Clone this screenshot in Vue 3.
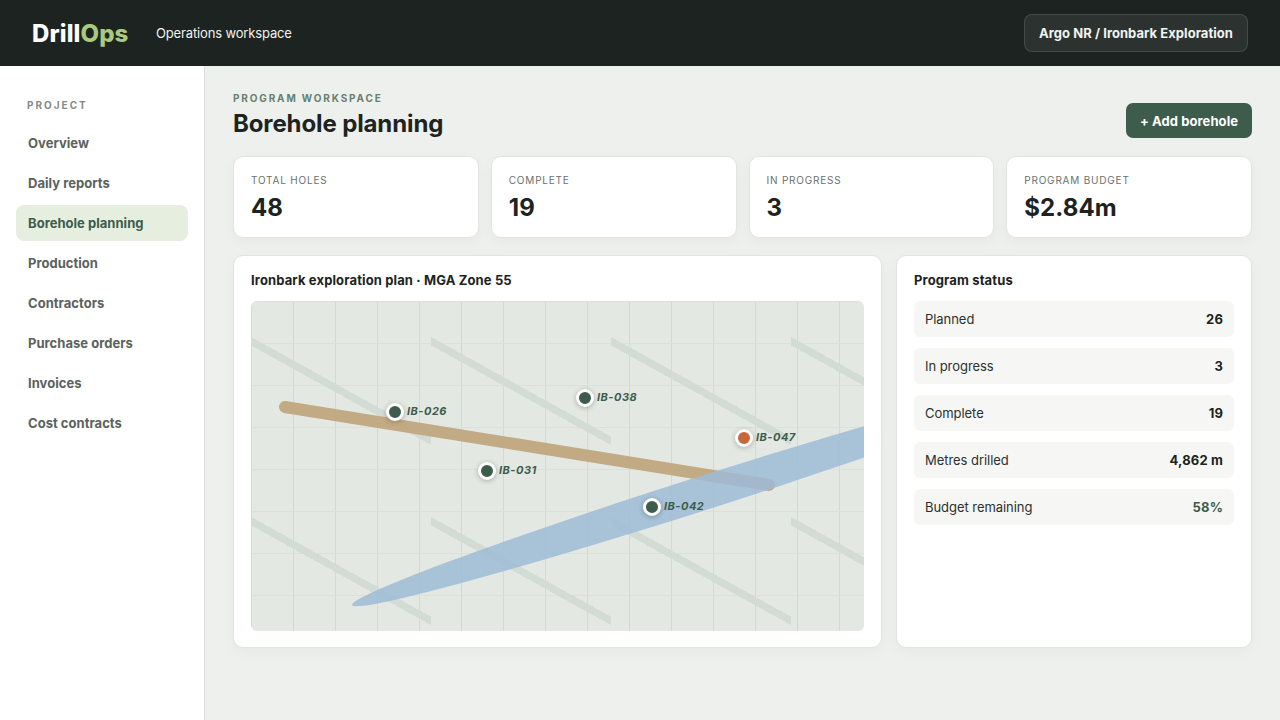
<script setup>
const nav = ['Overview', 'Daily reports', 'Borehole planning', 'Production', 'Contractors', 'Purchase orders', 'Invoices', 'Cost contracts']
const stats = [
  { label: 'TOTAL HOLES', value: '48' },
  { label: 'COMPLETE', value: '19' },
  { label: 'IN PROGRESS', value: '3' },
  { label: 'PROGRAM BUDGET', value: '$2.84m' },
]
const status = [
  { label: 'Planned', value: '26' },
  { label: 'In progress', value: '3' },
  { label: 'Complete', value: '19' },
  { label: 'Metres drilled', value: '4,862 m' },
  { label: 'Budget remaining', value: '58%', good: true },
]
const pins = [
  { id: 'IB-026', x: 144, y: 111 },
  { id: 'IB-038', x: 334, y: 97 },
  { id: 'IB-031', x: 236, y: 170 },
  { id: 'IB-042', x: 401, y: 206 },
  { id: 'IB-047', x: 493, y: 137, alert: true },
]
</script>

<template>
  <div class="app">
    <header class="topbar">
      <div class="logo">Drill<span>Ops</span></div>
      <div class="tagline">Operations workspace</div>
      <div class="chip">Argo NR / Ironbark Exploration</div>
    </header>
    <div class="body">
      <aside class="sidebar">
        <div class="side-title">PROJECT</div>
        <nav class="nav">
          <a v-for="n in nav" :key="n" class="nav-item" :class="{ active: n === 'Borehole planning' }">{{ n }}</a>
        </nav>
      </aside>
      <main class="main">
        <div class="head">
          <div>
            <div class="eyebrow">PROGRAM WORKSPACE</div>
            <h1>Borehole planning</h1>
          </div>
          <button class="add">+ Add borehole</button>
        </div>
        <section class="stats">
          <div v-for="s in stats" :key="s.label" class="card stat">
            <div class="stat-label">{{ s.label }}</div>
            <div class="stat-value">{{ s.value }}</div>
          </div>
        </section>
        <section class="lower">
          <div class="card panel">
            <h2>Ironbark exploration plan · MGA Zone 55</h2>
            <div class="map">
              <svg class="overlay" width="613" height="330" viewBox="0 0 613 330">
                <line x1="34" y1="106" x2="518" y2="184" stroke="#c2aa84" stroke-width="12" stroke-linecap="round" />
                <ellipse cx="446" cy="194" rx="362" ry="17" transform="rotate(-17.7 446 194)" fill="#9dbbd6" fill-opacity="0.85" />
              </svg>
              <div
                v-for="p in pins"
                :key="p.id"
                class="pin"
                :style="{ left: p.x + 'px', top: p.y + 'px' }"
              >
                <span class="dot" :class="{ alert: p.alert }"></span>
                <span class="pin-label">{{ p.id }}</span>
              </div>
            </div>
          </div>
          <div class="card panel">
            <h2>Program status</h2>
            <div class="rows">
              <div v-for="r in status" :key="r.label" class="row">
                <span>{{ r.label }}</span>
                <strong :class="{ good: r.good }">{{ r.value }}</strong>
              </div>
            </div>
          </div>
        </section>
      </main>
    </div>
  </div>
</template>

<style>
html, body { margin: 0; }
</style>

<style scoped>
.app {
  width: 1280px;
  height: 720px;
  display: flex;
  flex-direction: column;
  overflow: hidden;
  font-family: Inter, "Liberation Sans", sans-serif;
  color: #1c2321;
  background: #eef0ed;
}
.topbar {
  height: 66px;
  flex: none;
  box-sizing: border-box;
  background: #1c2321;
  display: flex;
  align-items: center;
  padding: 0 32px;
}
.logo {
  font-size: 24px;
  font-weight: 800;
  letter-spacing: 0.12px;
  color: #fff;
  width: 124px;
}
.logo span { color: #a9c97f; }
.tagline { font-size: 13px; letter-spacing: -0.15px; color: #f1f3ef; }
.chip {
  margin-left: auto;
  box-sizing: border-box;
  height: 38px;
  display: flex;
  align-items: center;
  padding: 0 14px;
  font-size: 13px;
  font-weight: 650;
  letter-spacing: 0.05px;
  color: #f2f4f0;
  background: rgba(255, 255, 255, 0.07);
  border: 1px solid rgba(255, 255, 255, 0.12);
  border-radius: 8px;
}
.body { flex: 1; display: flex; min-height: 0; }
.sidebar {
  width: 205px;
  flex: none;
  box-sizing: border-box;
  background: #fff;
  border-right: 1px solid #dcdfdb;
  padding: 33px 16px 0;
}
.side-title {
  font-size: 10px;
  font-weight: 650;
  letter-spacing: 2px;
  line-height: 12px;
  color: #858b87;
  padding-left: 11px;
  margin-bottom: 14px;
}
.nav { display: flex; flex-direction: column; gap: 4px; }
.nav-item {
  height: 36px;
  display: flex;
  align-items: center;
  padding: 0 12px;
  border-radius: 8px;
  font-size: 13px;
  font-weight: 650;
  letter-spacing: 0.03px;
  color: #5b625e;
}
.nav-item.active { background: #e6eee0; color: #3d5c4b; }
.main { flex: 1; min-width: 0; box-sizing: border-box; padding: 26px 28px 0; }
.head { display: flex; justify-content: space-between; align-items: flex-start; height: 46px; margin-bottom: 18px; }
.eyebrow {
  font-size: 10px;
  font-weight: 700;
  letter-spacing: 1.85px;
  line-height: 12px;
  color: #66806f;
}
h1 {
  margin: 5px 0 0;
  font-size: 24px;
  font-weight: 700;
  letter-spacing: -0.12px;
  line-height: 30px;
  color: #1c2321;
}
.add {
  align-self: flex-end;
  width: 126px;
  height: 35px;
  border: 0;
  padding: 0;
  border-radius: 7px;
  background: #3d5c4b;
  color: #fff;
  font-family: inherit;
  font-size: 13px;
  font-weight: 700;
  letter-spacing: 0.08px;
}
.card {
  box-sizing: border-box;
  background: #fff;
  border: 1px solid #e1e4e0;
  border-radius: 10px;
  box-shadow: 0 4px 14px rgba(28, 35, 33, 0.035);
}
.stats { display: grid; grid-template-columns: repeat(4, 1fr); gap: 12px; margin-bottom: 17px; }
.stat { height: 82px; padding: 17px 17px 0; }
.stat-label { font-size: 10px; letter-spacing: 0.8px; line-height: 12px; color: #6a716d; }
.stat-value {
  margin-top: 7px;
  font-size: 24px;
  font-weight: 700;
  line-height: 30px;
  letter-spacing: 0.1px;
  color: #1c2321;
}
.lower { display: grid; grid-template-columns: 649px 356px; gap: 14px; }
.panel { height: 393px; padding: 17px; }
h2 {
  margin: 0 0 14px;
  font-size: 13px;
  font-weight: 700;
  letter-spacing: 0.13px;
  line-height: 14px;
  color: #1c2321;
}
.map {
  position: relative;
  height: 330px;
  overflow: hidden;
  border-radius: 6px;
  background-color: #e3e8e2;
  background-image:
    linear-gradient(29deg, transparent 48.5%, #d3dcd4 48.5%, #d3dcd4 51.5%, transparent 51.5%),
    linear-gradient(#dbe1da 1px, transparent 1px),
    linear-gradient(90deg, #d3dad2 1px, transparent 1px);
  background-size: 180px 180px, 42px 42px, 42px 42px;
}
.overlay { position: absolute; left: 0; top: 0; }
.pin {
  position: absolute;
  width: 0;
  height: 0;
}
.dot {
  position: absolute;
  left: -9px;
  top: -9px;
  width: 12px;
  height: 12px;
  box-sizing: content-box;
  border: 3px solid #fff;
  border-radius: 50%;
  background: #3d5c4b;
  box-shadow: 0 1px 5px rgba(28, 35, 33, 0.3);
}
.dot.alert { background: #c8663a; }
.pin-label {
  position: absolute;
  left: 12px;
  top: -8px;
  font-size: 11px;
  font-weight: 700;
  font-style: italic;
  letter-spacing: 0.5px;
  line-height: 14px;
  white-space: nowrap;
  color: #3d5c4b;
}
.rows { display: flex; flex-direction: column; gap: 11px; }
.row {
  height: 36px;
  display: flex;
  align-items: center;
  justify-content: space-between;
  padding: 0 11px;
  border-radius: 6px;
  background: #f6f7f5;
  font-size: 13px;
  letter-spacing: -0.05px;
  color: #2b312e;
}
.row strong { font-weight: 700; letter-spacing: 0.15px; color: #1c2321; }
.row strong.good { color: #3d5c4b; }
</style>
